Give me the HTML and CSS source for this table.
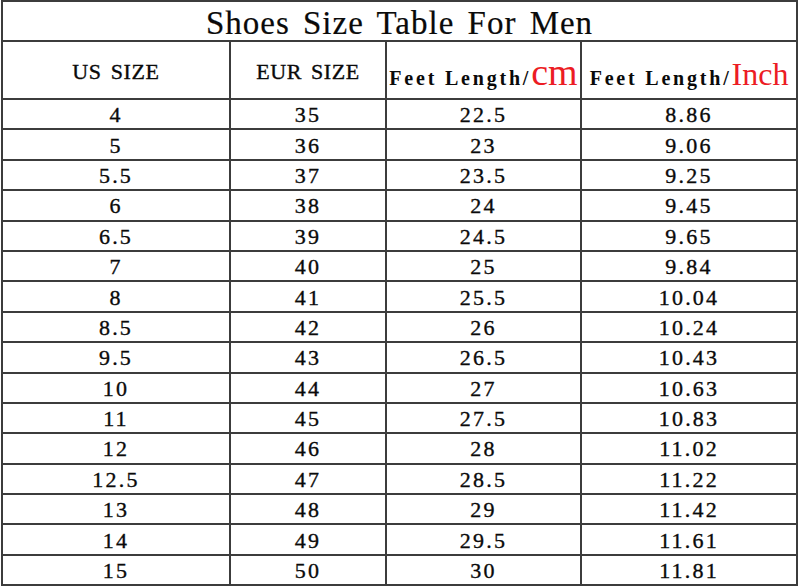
FILE: index.html
```html
<!DOCTYPE html>
<html lang="en">
<head>
<meta charset="utf-8">
<title>Shoes Size Table For Men</title>
<link rel="stylesheet" href="styles.css">
</head>
<body>
<table class="size-table">
  <colgroup>
    <col class="c1"><col class="c2"><col class="c3"><col class="c4">
  </colgroup>
  <thead>
    <tr class="title-row"><th colspan="4" class="title">Shoes Size Table For Men</th></tr>
    <tr class="head-row">
      <th class="head">US SIZE</th>
      <th class="head">EUR SIZE</th>
      <th class="head-len">Feet Length/<span class="unit unit-cm">cm</span></th>
      <th class="head-len">Feet Length/<span class="unit unit-inch">Inch</span></th>
    </tr>
  </thead>
  <tbody>
    <tr><td>4</td><td>35</td><td>22.5</td><td>8.86</td></tr>
    <tr><td>5</td><td>36</td><td>23</td><td>9.06</td></tr>
    <tr><td>5.5</td><td>37</td><td>23.5</td><td>9.25</td></tr>
    <tr><td>6</td><td>38</td><td>24</td><td>9.45</td></tr>
    <tr><td>6.5</td><td>39</td><td>24.5</td><td>9.65</td></tr>
    <tr><td>7</td><td>40</td><td>25</td><td>9.84</td></tr>
    <tr><td>8</td><td>41</td><td>25.5</td><td>10.04</td></tr>
    <tr><td>8.5</td><td>42</td><td>26</td><td>10.24</td></tr>
    <tr><td>9.5</td><td>43</td><td>26.5</td><td>10.43</td></tr>
    <tr><td>10</td><td>44</td><td>27</td><td>10.63</td></tr>
    <tr><td>11</td><td>45</td><td>27.5</td><td>10.83</td></tr>
    <tr><td>12</td><td>46</td><td>28</td><td>11.02</td></tr>
    <tr><td>12.5</td><td>47</td><td>28.5</td><td>11.22</td></tr>
    <tr><td>13</td><td>48</td><td>29</td><td>11.42</td></tr>
    <tr><td>14</td><td>49</td><td>29.5</td><td>11.61</td></tr>
    <tr><td>15</td><td>50</td><td>30</td><td>11.81</td></tr>
  </tbody>
</table>
</body>
</html>
```
FILE: styles.css
```css
html, body {
  margin: 0;
  padding: 0;
  background: #ffffff;
}

body {
  padding: 0 0 0 1px;
  font-family: "Liberation Serif", "Noto Sans CJK SC", serif;
  color: #0a0a0a;
}

.size-table {
  border-collapse: collapse;
  width: 795px;
  table-layout: fixed;
}

.c1 { width: 228px; }
.c2 { width: 156px; }
.c3 { width: 195px; }
.c4 { width: 216px; }

.size-table th,
.size-table td {
  border: 2px solid #3c3c3c;
  padding: 0;
  text-align: center;
  white-space: nowrap;
  font-weight: normal;
  -webkit-text-stroke: 0.35px #0a0a0a;
}

.size-table .title {
  height: 34px;
  font-size: 33px;
  letter-spacing: 1px;
  word-spacing: 4px;
  line-height: 34px;
  padding-top: 4px;
  -webkit-text-stroke: 0.2px #0a0a0a;
}

.size-table .head {
  height: 52px;
  font-size: 22px;
  letter-spacing: 0.6px;
  word-spacing: 3px;
  vertical-align: middle;
  padding-top: 4px;
}

.size-table .head-len {
  height: 51px;
  font-size: 20px;
  font-weight: bold;
  letter-spacing: 2.8px;
  vertical-align: bottom;
  line-height: 30px;
  padding-bottom: 5px;
  -webkit-text-stroke: 0;
}

.unit {
  color: #ec1c24;
  font-weight: normal;
  letter-spacing: 0;
  -webkit-text-stroke: 0;
}

.unit-cm {
  font-size: 38px;
}

.unit-inch {
  font-size: 32px;
}

.size-table td {
  height: 26.4px;
  padding-top: 2px;
  font-size: 22px;
  letter-spacing: 2.2px;
  line-height: 24px;
}
```
